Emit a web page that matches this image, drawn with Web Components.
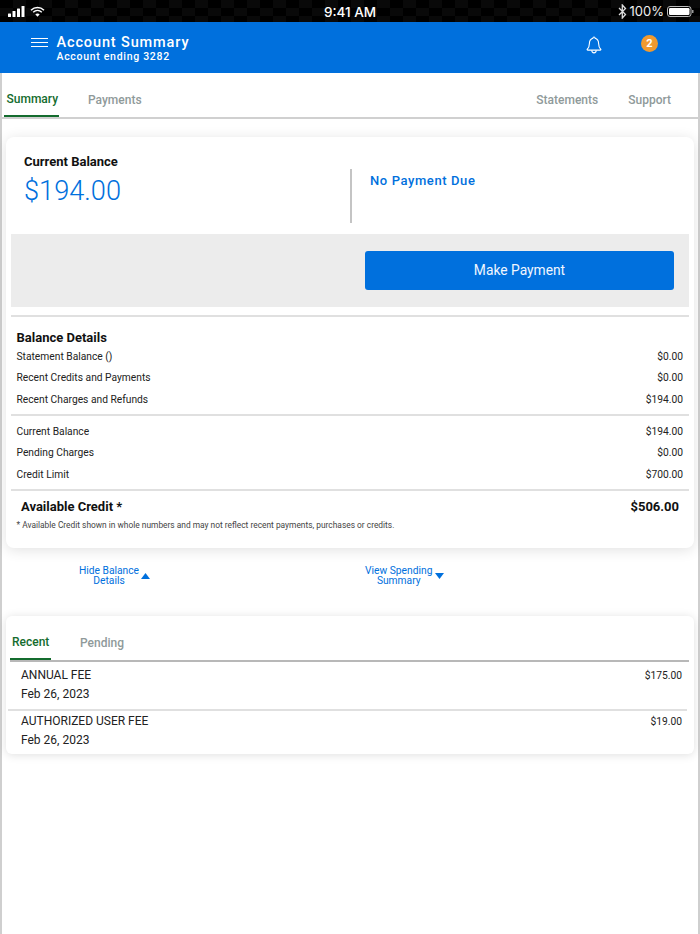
<!DOCTYPE html>
<html><head><meta charset="utf-8">
<style>
html,body{margin:0;padding:0;background:#fff}
body{width:700px;height:934px;overflow:hidden;font-family:Roboto,"Liberation Sans",sans-serif;color:#111;position:relative}
app-root{display:block}
</style></head><body>
<app-root>
<status-bar></status-bar>
<app-header title-text="Account Summary" sub-text="Account ending 3282" badge="2"></app-header>
<page-body>
<main-tabs></main-tabs>
<balance-card></balance-card>
<toggle-links></toggle-links>
<activity-card></activity-card>
</page-body>
</app-root>
<script>
function def(name, html){
  customElements.define(name, class extends HTMLElement{
    constructor(){super();const r=this.attachShadow({mode:'open'});
      r.innerHTML=typeof html==='function'?html(this):html;}
  });
}
def('status-bar',`<style>
:host{display:flex;height:22px;background-color:#000;
background-image:conic-gradient(#090909 25%,#000 0 50%,#090909 0 75%,#000 0);background-size:26px 16px;
color:#fff;align-items:center;position:relative;font:400 13px/22px Inter,"Liberation Sans",sans-serif}
.l{flex:1;display:flex;align-items:center;gap:5px;padding-left:8px}
.c{font-size:13.5px;font-weight:500;margin-left:-2px;position:relative;top:1px;white-space:nowrap}
.r{flex:1;display:flex;justify-content:flex-end;align-items:center;padding-right:6px;gap:3px;color:#eee}
</style>
<div class="l">
<svg width="17" height="11" viewBox="0 0 17 11" fill="#fff"><rect x="0" y="7.500" width="3" height="3.500" rx=".5"/><rect x="4.500" y="5" width="3" height="6" rx=".5"/><rect x="9" y="2.500" width="3" height="8.500" rx=".5"/><rect x="13.500" y="0" width="3" height="11" rx=".5"/></svg>
<svg width="15" height="11" viewBox="0 0 15 11"><path d="M1 4.200C4.800.6 10.200.6 14 4.200" fill="none" stroke="#fff" stroke-width="1.500"/><path d="M3.200 6.300c2.500-2.300 6.100-2.300 8.600 0" fill="none" stroke="#fff" stroke-width="1.500"/><path d="M5.300 8.300c1.300-1.100 3.100-1.100 4.400 0L7.500 10.700z" fill="#fff"/></svg>
</div>
<div class="c">9:41 AM</div>
<div class="r">
<svg width="9" height="15" viewBox="0 0 9 15" fill="none" stroke="#ddd" stroke-width="1.300"><path d="M1 4l6.500 6.500L4.300 14V1l3.200 3.500L1 11"/></svg>
<span>100%</span>
<svg width="27" height="11" viewBox="0 0 27 11"><rect x=".5" y=".5" width="23.500" height="10" rx="2.500" fill="none" stroke="#bbb"/><rect x="2" y="2" width="20.500" height="7" rx="1.200" fill="#fff"/><rect x="25" y="4" width="1.500" height="3" fill="#999"/></svg>
</div>`);
def('app-header',el=>`<style>
:host{display:flex;height:51px;background:#0070dd;color:#fff;box-sizing:border-box;align-items:center;position:relative}
.menu{margin-left:31px;width:17px;height:9.500px;display:flex;flex-direction:column;justify-content:space-between;position:relative;top:-5px}
.menu i{display:block;height:1.500px;background:#fff}
.t{margin-left:8.500px;position:relative;top:1.500px;flex:1}
.a{font-size:14.500px;font-weight:500;letter-spacing:.87px;line-height:16px}
.b{font-size:10.500px;font-weight:500;letter-spacing:.7px;line-height:12px}
.bell{margin-right:39px;position:relative;top:-3px;display:block}
.badge{width:17px;height:17px;border-radius:50%;background:#f09a30;font:700 11px/17px Roboto,sans-serif;text-align:center;margin-right:42px;position:relative;top:-4.500px}
.tip{position:absolute;right:0;bottom:-3px;width:3px;height:3px;background:#0070dd}
</style>
<div class="menu"><i></i><i></i><i></i></div>
<div class="t"><div class="a">${el.getAttribute('title-text')}</div><div class="b">${el.getAttribute('sub-text')}</div></div>
<svg class="bell" width="16" height="18" viewBox="0 0 16 18" fill="none" stroke="#fff" stroke-width="1.100"><path d="M8 1c-.8 0-1.100.5-1.100 1.300C4.600 3 3.400 4.800 3.400 7.500c0 3-.7 4.500-2.300 6 0 .4.200.6.600.6h12.600c.4 0 .6-.2.600-.6-1.600-1.500-2.300-3-2.300-6 0-2.700-1.200-4.500-3.500-5.200C9.100 1.500 8.800 1 8 1z"/><path d="M5.800 14.300c0 1.500 1 2.600 2.200 2.600s2.200-1.100 2.200-2.600"/></svg>
<div class="badge">${el.getAttribute('badge')}</div><div class="tip"></div>`);
def('page-body',`<style>
:host{display:block;box-sizing:border-box;height:861px;background:#fff;border-left:2px solid #cfcfcf;border-right:2px solid #cfcfcf;position:relative}
</style><slot></slot>`);
def('main-tabs',`<style>
:host{display:flex;height:46px;box-sizing:border-box;border-bottom:2px solid #d0d0d0;font-size:12px;font-weight:500;color:#8f9a9a}
.t{display:flex;align-items:center;height:44px;box-sizing:border-box;padding-top:9px}
.on{color:#146c2e;width:55px;margin-left:2px;padding-left:2.500px;border-bottom:2px solid #146c2e}
.p{margin-left:29px}
.s{margin-left:auto}
.u{margin-left:30px;margin-right:27px}
</style>
<div class="t on">Summary</div><div class="t p">Payments</div><div class="t s">Statements</div><div class="t u">Support</div>`);
def('balance-card',`<style>
:host{display:block;margin:18px 4px 0 4px;height:411px;box-sizing:border-box;background:#fff;border-radius:8px;box-shadow:0 2px 14px rgba(0,0,0,.12);padding:0 5px}
.top{display:flex;height:97px;box-sizing:border-box}
.cb{width:339px;padding:18px 0 0 13px;box-sizing:border-box}
.cb b{display:block;font-size:13px;font-weight:700;line-height:14px;color:#111}
.amt{font-size:27.200px;font-weight:300;color:#0070dd;line-height:32px;margin-top:6px}
.due{height:50px;margin-top:32px;border-left:2px solid #c4c4c4;padding:4px 0 0 18px;font-size:13px;font-weight:500;letter-spacing:.6px;color:#0070dd;line-height:16px}
.pay{height:73px;background:#ececec;display:flex;justify-content:flex-end;align-items:center;padding-right:15px}
.btn{width:309px;height:39px;border-radius:3px;background:#0070dd;color:#f0f6ff;font-size:13.800px;line-height:39px;text-align:center}
hr{border:0;height:2px;background:#e0e0e0;margin:0}
h3{margin:0;font-size:13px;font-weight:700;line-height:16px;padding:12.500px 0 0 5.500px;color:#111}
.row{display:flex;justify-content:space-between;font-size:10.250px;line-height:21.600px;padding:0 6px 0 5.500px;color:#222}
.ac{display:flex;justify-content:space-between;font-size:13px;font-weight:700;padding:8.500px 10px 0 10px;line-height:16px;color:#111}
.fn{font-size:8.400px;color:#444;padding:2.500px 0 0 5.500px;line-height:14px}
</style>
<div class="top"><div class="cb"><b>Current Balance</b><div class="amt">$194.00</div></div><div class="due">No Payment Due</div></div>
<div class="pay"><div class="btn">Make Payment</div></div>
<hr style="margin-top:8px">
<h3>Balance Details</h3>
<div class="row"><span>Statement Balance ()</span><span>$0.00</span></div>
<div class="row"><span>Recent Credits and Payments</span><span>$0.00</span></div>
<div class="row"><span>Recent Charges and Refunds</span><span>$194.00</span></div>
<hr style="margin:3.400px 0 5px">
<div class="row"><span>Current Balance</span><span>$194.00</span></div>
<div class="row"><span>Pending Charges</span><span>$0.00</span></div>
<div class="row"><span>Credit Limit</span><span>$700.00</span></div>
<hr style="margin-top:3.300px">
<div class="ac"><span>Available Credit *</span><span>$506.00</span></div>
<div class="fn">* Available Credit shown in whole numbers and may not reflect recent payments, purchases or credits.</div>`);
def('toggle-links',`<style>
:host{display:block;height:68px;color:#0070dd;font-size:10.250px;line-height:10px;text-align:center}
.w{display:flex}
.a,.b{display:flex;align-items:center;gap:2px;margin-top:17.500px}
.b{gap:3px}
.a{margin-left:77px}.b{margin-left:215px}
svg{display:block}
</style>
<div class="w"><div class="a"><span>Hide Balance<br>Details</span><svg width="9" height="6" viewBox="0 0 9 6" fill="#0070dd"><path d="M4.500 0L9 6H0z"/></svg></div>
<div class="b"><span>View Spending<br>Summary</span><svg width="9" height="6" viewBox="0 0 9 6" fill="#0070dd"><path d="M0 0H9L4.500 6z"/></svg></div></div>`);
def('activity-card',`<style>
:host{display:block;margin:0 4px;height:138px;box-sizing:border-box;background:#fff;border-radius:6px;box-shadow:0 1px 10px rgba(0,0,0,.13)}
.tabs{height:46px;box-sizing:border-box;margin:0 5px 0 4px;border-bottom:2px solid #b8b8b8;display:flex;font-size:12px;font-weight:500;color:#8f9a9a}
.t{height:44px;display:flex;align-items:center;padding-top:10px;box-sizing:border-box}
.on{color:#146c2e;width:41px;padding-left:2px;border-bottom:2px solid #146c2e}
.p{margin-left:29px}
.item{display:flex;justify-content:space-between;margin:0 7px 0 2px;padding:4.300px 5px 0 13px;height:47px;box-sizing:border-box;font-size:12px;line-height:19px;color:#222}
.item+.item{border-top:2px solid #e0e0e0;height:45px;padding-top:.5px}
.amt{font-size:10.250px}
</style>
<div class="tabs"><div class="t on">Recent</div><div class="t p">Pending</div></div>
<div class="item"><div><div>ANNUAL FEE</div><div>Feb 26, 2023</div></div><div class="amt">$175.00</div></div>
<div class="item"><div><div>AUTHORIZED USER FEE</div><div>Feb 26, 2023</div></div><div class="amt">$19.00</div></div>`);
</script>
</body></html>
